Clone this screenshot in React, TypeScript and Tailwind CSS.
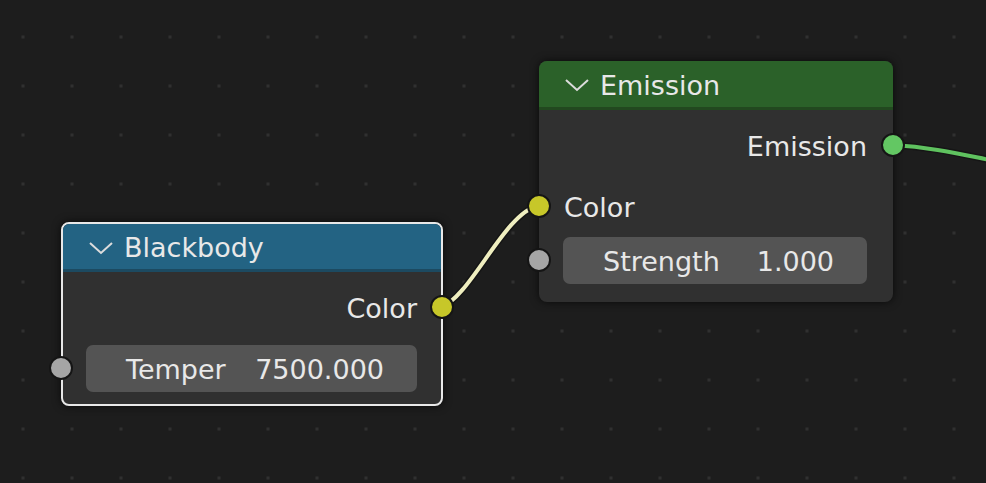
const FONT = { fontFamily: '"DejaVu Sans", "Liberation Sans", sans-serif' };

function Chevron() {
  return (
    <svg width="24" height="14" viewBox="0 0 24 14" className="shrink-0 -mt-[2px]">
      <polyline points="1,2 12,12 23,2" fill="none" stroke="#dcdcdc" strokeWidth="2" />
    </svg>
  );
}

function Socket({ color, className }: { color: string; className: string }) {
  return (
    <span
      className={`absolute w-[24px] h-[24px] rounded-full border-2 border-[#151515] -translate-x-1/2 -translate-y-1/2 ${className}`}
      style={{ background: color }}
    />
  );
}

function Field({ label, value }: { label: string; value: string }) {
  return (
    <div className="h-[47px] pt-[4px] rounded-[7px] bg-[#545454] flex items-center justify-between pl-[40px] pr-[33px] text-[27px] text-[#e8e8e8]">
      <span>{label}</span>
      <span>{value}</span>
    </div>
  );
}

export default function App() {
  return (
    <div
      className="relative w-[986px] h-[483px] overflow-hidden bg-[#1d1d1d] bg-[radial-gradient(circle,#303030_1.6px,transparent_1.8px)] bg-size-[49px_49px] bg-position-[-1.5px_12.5px]"
      style={FONT}
    >
      <svg className="absolute inset-0" width="986" height="483">
        <path d="M441 307 C470 298 505 212 538 206" fill="none" stroke="#151515" strokeWidth="7" />
        <path d="M441 307 C470 298 505 212 538 206" fill="none" stroke="#efeebf" strokeWidth="4" />
        <path d="M893 145 C930 147 960 154 990 160" fill="none" stroke="#151515" strokeWidth="7" />
        <path d="M893 145 C930 147 960 154 990 160" fill="none" stroke="#5fc25f" strokeWidth="4" />
      </svg>

      {/* Emission */}
      <div className="absolute left-[539px] top-[61px] w-[354px] h-[241px] rounded-[8px] bg-[#303030] shadow-[0_0_8px_rgba(0,0,0,0.7)]">
        <div className="h-[49px] pt-[4px] rounded-t-[8px] bg-[#2b6129] border-b-[3px] border-[#22481f] flex items-center gap-[11px] pl-[26px] text-[27px] text-[#e8e8e8]">
          <Chevron />
          <span>Emission</span>
        </div>
        <div className="h-[36px] pt-[4px] mt-[17px] flex items-center justify-end pr-[26px] text-[27px] text-[#e8e8e8]">
          Emission
        </div>
        <div className="h-[36px] pt-[4px] mt-[25px] flex items-center pl-[25px] text-[27px] text-[#e8e8e8]">
          Color
        </div>
        <div className="mt-[13px] ml-[24px] mr-[26px]">
          <Field label="Strength" value="1.000" />
        </div>
        <Socket color="#63c763" className="left-[354px] top-[84px]" />
        <Socket color="#c7c729" className="left-0 top-[145px]" />
        <Socket color="#a5a5a5" className="left-0 top-[199px]" />
      </div>

      {/* Blackbody */}
      <div className="absolute left-[61px] top-[222px] w-[382px] h-[184px] rounded-[8px] bg-[#303030] border-2 border-[#e8e8e8] shadow-[0_0_8px_rgba(0,0,0,0.7)]">
        <div className="h-[48px] pt-[4px] rounded-t-[6px] bg-[#236383] border-b-[3px] border-[#1c4a61] flex items-center gap-[11px] pl-[26px] text-[27px] text-[#e8e8e8]">
          <Chevron />
          <span>Blackbody</span>
        </div>
        <div className="h-[36px] pt-[4px] mt-[17px] flex items-center justify-end pr-[24px] text-[27px] text-[#e8e8e8]">
          Color
        </div>
        <div className="mt-[20px] ml-[23px] mr-[24px]">
          <Field label="Temper" value="7500.000" />
        </div>
        <Socket color="#c7c729" className="left-[379px] top-[83px]" />
        <Socket color="#a5a5a5" className="left-[-2px] top-[144px]" />
      </div>
    </div>
  );
}
